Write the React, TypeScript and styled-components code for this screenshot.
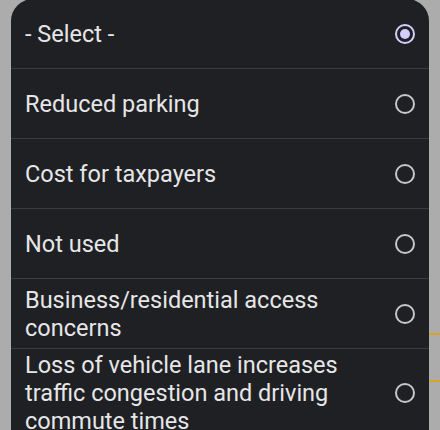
import React, { useState } from 'react'
import styled, { createGlobalStyle } from 'styled-components'

const GlobalStyle = createGlobalStyle`
    html, body {
        margin: 0;
        padding: 0;
        background: #acacac;
        overflow: hidden;
    }
    * {
        box-sizing: border-box;
    }
`

const Page = styled.div`
    position: relative;
    width: 440px;
    height: 430px;
    overflow: hidden;
    background: #acacac;
`

const Backdrop = styled.div`
    display: flex;
    flex-direction: column;
    gap: 45px;
    padding: 333px 0 0 300px;
`

const FieldLine = styled.div`
    height: 2px;
    background: #d9a520;
`

const Sheet = styled.div`
    position: absolute;
    top: -1px;
    left: 11px;
    width: 418px;
    height: 452px;
    background: #1f2023;
    border-radius: 22px;
    overflow: hidden;
    font-family: Roboto, 'Noto Sans', sans-serif;
`

const OptionRow = styled.label`
    display: flex;
    align-items: center;
    justify-content: space-between;
    min-height: 70px;
    padding: 2px 14px;
    border-bottom: 1px solid #3b3c3f;
    cursor: pointer;
`

const OptionText = styled.span`
    color: #e6e6e8;
    font-size: 23.5px;
    line-height: 28px;
    max-width: 335px;
`

const Radio = styled.span<{ checked: boolean }>`
    flex: none;
    width: 20px;
    height: 20px;
    border-radius: 50%;
    border: 2px solid ${props => props.checked ? '#d4ceff' : '#c7c6ca'};
    display: flex;
    align-items: center;
    justify-content: center;

    &::after {
        content: '';
        width: 10px;
        height: 10px;
        border-radius: 50%;
        background: ${props => props.checked ? '#d4ceff' : 'transparent'};
    }
`

const options = [
    '- Select -',
    'Reduced parking',
    'Cost for taxpayers',
    'Not used',
    'Business/residential access concerns',
    'Loss of vehicle lane increases traffic congestion and driving commute times',
]

export default function App() {
    const [selected, setSelected] = useState(0)

    return (
        <Page>
            <GlobalStyle />
            <Backdrop>
                <FieldLine />
                <FieldLine />
            </Backdrop>
            <Sheet>
                {options.map((option, i) => (
                    <OptionRow key={option} onClick={() => setSelected(i)}>
                        <OptionText>{option}</OptionText>
                        <Radio checked={selected === i} />
                    </OptionRow>
                ))}
            </Sheet>
        </Page>
    )
}
